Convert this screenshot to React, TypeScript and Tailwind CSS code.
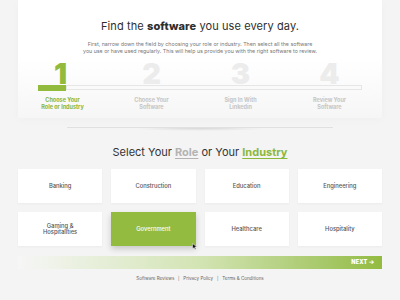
import React from "react";

const steps = [
  { n: "1", l1: "Choose Your", l2: "Role or Industry", active: true },
  { n: "2", l1: "Choose Your", l2: "Software", active: false },
  { n: "3", l1: "Sign In With", l2: "Linkedin", active: false },
  { n: "4", l1: "Review Your", l2: "Software", active: false },
];

const cards = [
  "Banking",
  "Construction",
  "Education",
  "Engineering",
  "Gaming &\nHospitalities",
  "Government",
  "Healthcare",
  "Hospitality",
];

export default function App() {
  return (
    <div
      className="relative w-[400px] h-[300px] overflow-hidden bg-[#f4f4f4]"
      style={{ fontFamily: "Inter, 'Noto Sans', sans-serif" }}
    >
      {/* top panel */}
      <div className="mx-[18px] h-[118px] bg-gradient-to-b from-white via-white to-[#f6f6f6] shadow-[0_2px_10px_rgba(0,0,0,0.025)] flex flex-col items-center">
        <div className="mt-[18px] text-[11px] leading-[16px] text-[#2e2e2e] tracking-[0.1px]">
          Find the <span className="font-extrabold">software</span> you use every day.
        </div>
        <div className="mt-[7px] text-[5.3px] leading-[6.5px] text-[#777] text-center">
          First, narrow down the field by choosing your role or industry. Then select all the software
          <br />
          you use or have used regularly. This will help us provide you with the right software to review.
        </div>
        {/* steps */}
        <div className="mt-[9px] w-full">
          <div className="grid grid-cols-[89px_89px_89px_89px] h-[22px] items-end">
            {steps.map((s) =>
              s.active ? (
                <div key={s.n} className="flex justify-end pr-[40px]">
                  <span className="text-[29px] leading-[22px] font-black text-[#92bb3e]">{s.n}</span>
                </div>
              ) : (
                <div key={s.n} className="flex justify-center">
                  <span className="text-[29px] leading-[22px] font-black text-[#ececec]">{s.n}</span>
                </div>
              )
            )}
          </div>
          <div className="ml-[20px] w-[324px] h-[6px] flex">
            <div className="w-[28px] h-[6px] bg-[#92bb3e]" />
            <div className="flex-1 h-[5px] border border-[#e6e6e6] bg-[#fafafa]" />
          </div>
          <div className="mt-[6px] grid grid-cols-[89px_89px_89px_89px]">
            {steps.map((s) => (
              <div
                key={s.n}
                className={
                  "text-center text-[5.5px] leading-[6.5px] font-bold " +
                  (s.active ? "text-[#8bb536]" : "text-[#c6c6c6]")
                }
              >
                {s.l1}
                <br />
                {s.l2}
              </div>
            ))}
          </div>
        </div>
      </div>

      {/* divider */}
      <div className="mt-[9px] mx-[67px] relative">
        <div className="h-px bg-[#e0e0e0]" />
        <div className="mx-[60px] h-[3px] rounded-[50%] bg-[radial-gradient(ellipse_at_top,rgba(0,0,0,0.12),rgba(0,0,0,0)_70%)]" />
      </div>

      {/* heading */}
      <div className="mt-[13px] text-center text-[11px] leading-[16px] text-[#333]">
        Select Your{" "}
        <span className="font-bold text-[#b3b3b3] underline decoration-[1px] underline-offset-[2px]">Role</span>{" "}
        or Your{" "}
        <span className="font-bold text-[#8cb83a] underline decoration-[1px] underline-offset-[2px]">Industry</span>
      </div>

      {/* cards */}
      <div className="mt-[9px] mx-[18px] grid grid-cols-4 gap-x-[9px] gap-y-[9px]">
        {cards.map((c) => {
          const active = c === "Government";
          return (
            <div
              key={c}
              className={
                "h-[34px] flex items-center justify-center text-center whitespace-pre-line text-[5.8px] leading-[6px] font-medium " +
                (active
                  ? "bg-[#93bb3f] text-white shadow-[0_3px_6px_rgba(0,0,0,0.18)]"
                  : "bg-white text-[#555] shadow-[0_1px_2px_rgba(0,0,0,0.04)]")
              }
            >
              {c}
            </div>
          );
        })}
      </div>

      {/* next bar */}
      <div className="mt-[10px] mx-[18px] h-[13px] bg-gradient-to-r from-[#f6f6f6] via-[#d3e4b3] to-[#93bb3f] flex items-center justify-end pr-[8px]">
        <span className="text-white text-[5.5px] font-black tracking-[0.2px]">NEXT ➔</span>
      </div>

      {/* footer */}
      <div className="mt-[7px] text-center text-[4.5px] leading-[6px] text-[#666]">
        Software Reviews&nbsp;&nbsp;&nbsp;|&nbsp;&nbsp;&nbsp;Privacy Policy&nbsp;&nbsp;&nbsp;|&nbsp;&nbsp;&nbsp;Terms &amp; Conditions
      </div>

      {/* cursor */}
      <svg
        className="absolute left-[192px] top-[243px]"
        width="5"
        height="7"
        viewBox="0 0 10 14"
      >
        <path d="M1 1 L1 12 L4 9 L6 13 L8 12 L6 8 L10 8 Z" fill="#111" stroke="#fff" strokeWidth="1" />
      </svg>
    </div>
  );
}
